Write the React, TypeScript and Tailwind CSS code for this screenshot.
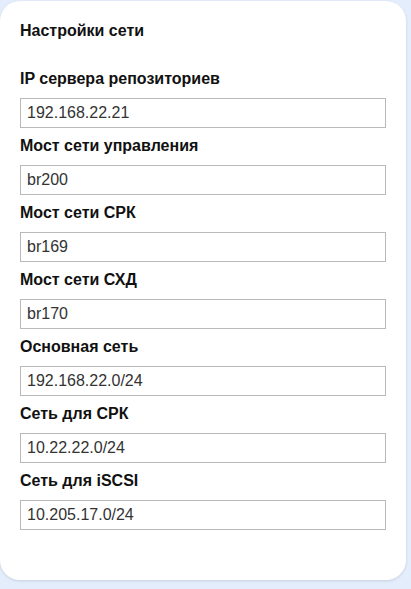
import React from "react";

const fields: [string, string][] = [
  ["IP сервера репозиториев", "192.168.22.21"],
  ["Мост сети управления", "br200"],
  ["Мост сети СРК", "br169"],
  ["Мост сети СХД", "br170"],
  ["Основная сеть", "192.168.22.0/24"],
  ["Сеть для СРК", "10.22.22.0/24"],
  ["Сеть для iSCSI", "10.205.17.0/24"],
];

export default function App() {
  return (
    <div
      className="w-[411px] h-[589px] bg-[#e3edfc] pt-[1px] overflow-hidden"
      style={{ fontFamily: '"Liberation Sans", Arial, sans-serif' }}
    >
      <div className="w-[406px] h-[579px] bg-white rounded-[20px] shadow-[0_1px_3px_rgba(0,0,0,0.12)] px-5 pt-5">
        <div className="text-[16px] leading-[20px] font-bold text-[#111]">Настройки сети</div>
        <div className="mt-[20px] flex flex-col">
          {fields.map(([label, value]) => (
            <div key={label} className="flex flex-col">
              <div className="mt-[9px] mb-[10px] text-[16px] leading-[18px] font-bold text-[#111]">{label}</div>
              <input
                readOnly
                value={value}
                className="w-[366px] h-[30px] border border-[#b9b9b9] bg-white px-[6px] text-[16px] text-[#333] outline-none"
                style={{ fontFamily: '"Liberation Sans", Arial, sans-serif' }}
              />
            </div>
          ))}
        </div>
      </div>
    </div>
  );
}
